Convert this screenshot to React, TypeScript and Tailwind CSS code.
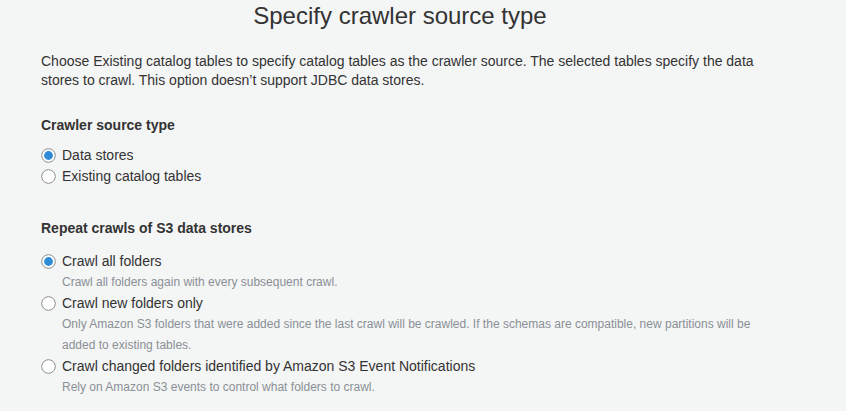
import React from 'react';

interface RadioOption {
  id: string;
  label: string;
  description?: string;
}

const sourceOptions: RadioOption[] = [
  { id: 'stores', label: 'Data stores' },
  { id: 'catalog', label: 'Existing catalog tables' },
];

const repeatOptions: RadioOption[] = [
  { id: 'all', label: 'Crawl all folders', description: 'Crawl all folders again with every subsequent crawl.' },
  {
    id: 'new',
    label: 'Crawl new folders only',
    description:
      'Only Amazon S3 folders that were added since the last crawl will be crawled. If the schemas are compatible, new partitions will be added to existing tables.',
  },
  {
    id: 'events',
    label: 'Crawl changed folders identified by Amazon S3 Event Notifications',
    description: 'Rely on Amazon S3 events to control what folders to crawl.',
  },
];

function RadioDot({ checked }: { checked: boolean }) {
  return (
    <svg width="15" height="15" viewBox="0 0 15 15" className="shrink-0">
      <circle cx="7.5" cy="7.5" r="6.8" fill="#ffffff" stroke="#8a8e91" strokeWidth="1" />
      {checked && <circle cx="7.5" cy="7.5" r="4.4" fill="#2e8bd6" />}
    </svg>
  );
}

function RadioGroup({ options, selected }: { options: RadioOption[]; selected: string }) {
  return (
    <div className="flex flex-col">
      {options.map((option) => (
        <div key={option.id} className="flex flex-col">
          <label className="flex h-[21px] items-center gap-[6px] text-[14px] text-[#333]">
            <RadioDot checked={option.id === selected} />
            <span>{option.label}</span>
          </label>
          {option.description && (
            <p className="w-[720px] pl-[21px] text-[12px] leading-[21px] text-[#8a9096]">{option.description}</p>
          )}
        </div>
      ))}
    </div>
  );
}

export default function App() {
  return (
    <div className="min-h-screen w-full bg-[#f4f5f5] font-['Liberation_Sans',Arial,sans-serif] text-[#333]">
      <h1 className="w-[800px] text-center text-[24px] leading-[32px] text-[#333]">Specify crawler source type</h1>

      <div className="pl-[41px]">
        <p className="mt-[20px] w-[722px] text-[14px] leading-[19px]">
          Choose Existing catalog tables to specify catalog tables as the crawler source. The selected tables specify the data
          stores to crawl. This option doesn’t support JDBC data stores.
        </p>

        <h2 className="mt-[25px] text-[14px] font-bold leading-[20px]">Crawler source type</h2>
        <div className="mt-[10px]">
          <RadioGroup options={sourceOptions} selected="stores" />
        </div>

        <h2 className="mt-[31px] text-[14px] font-bold leading-[20px]">Repeat crawls of S3 data stores</h2>
        <div className="mt-[13px]">
          <RadioGroup options={repeatOptions} selected="all" />
        </div>
      </div>
    </div>
  );
}
